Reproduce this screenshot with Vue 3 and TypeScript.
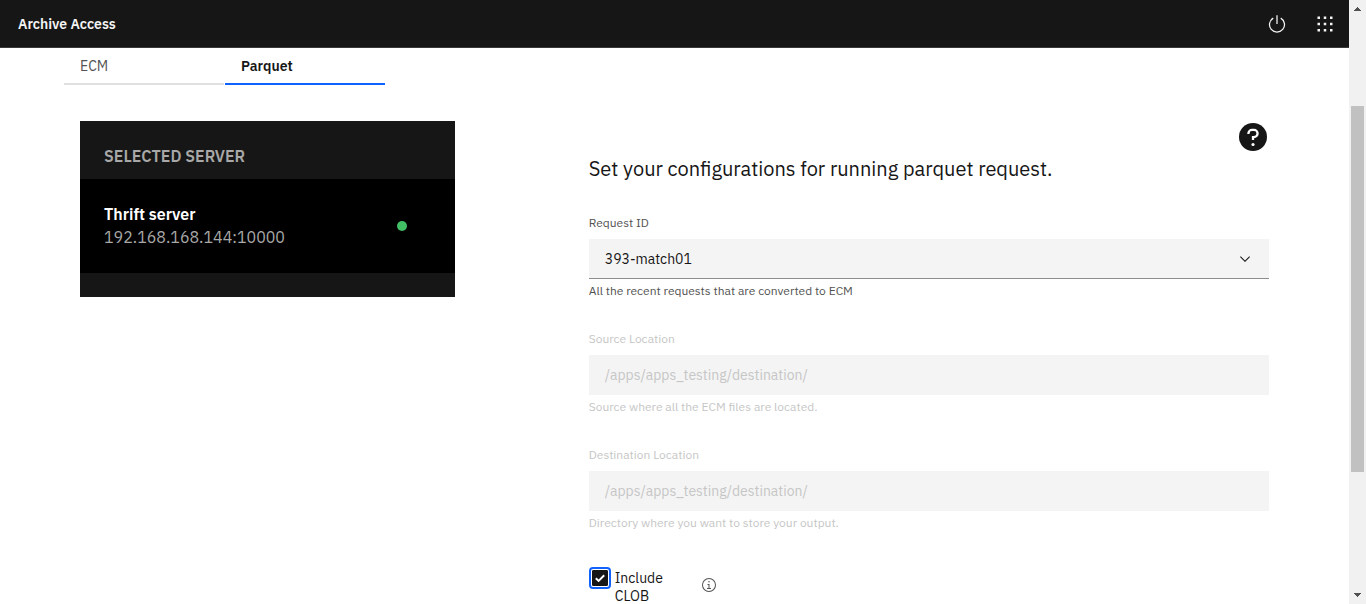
<script setup lang="ts">
import { ref } from 'vue'

interface Tab {
  id: string
  label: string
}

interface PathField {
  id: string
  label: string
  value: string
  helper: string
}

const tabs: Tab[] = [
  { id: 'ecm', label: 'ECM' },
  { id: 'parquet', label: 'Parquet' },
]
const activeTab = ref<string>('parquet')

const requests: string[] = ['393-match01']
const requestId = ref<string>('393-match01')

const fields: PathField[] = [
  {
    id: 'source',
    label: 'Source Location',
    value: '/apps/apps_testing/destination/',
    helper: 'Source where all the ECM files are located.',
  },
  {
    id: 'destination',
    label: 'Destination Location',
    value: '/apps/apps_testing/destination/',
    helper: 'Directory where you want to store your output.',
  },
]

const includeClob = ref<boolean>(true)
</script>

<template>
  <div class="shell">
    <div class="view">
      <header class="header">
        <a class="brand" href="#">Archive Access</a>
        <nav class="actions">
          <button class="icon-button" type="button" aria-label="Log out">
            <svg width="20" height="20" viewBox="0 0 32 32" fill="currentColor">
              <path d="M22.5 5.74l-1 1.73a11 11 0 1 1-11 0l-1-1.73a13 13 0 1 0 13 0z" />
              <path d="M15 2h2v14h-2z" />
            </svg>
          </button>
          <button class="icon-button" type="button" aria-label="Applications">
            <svg width="20" height="20" viewBox="0 0 32 32" fill="currentColor">
              <path
                d="M14 4h4v4h-4zM4 4h4v4H4zM24 4h4v4h-4zM14 14h4v4h-4zM4 14h4v4H4zM24 14h4v4h-4zM14 24h4v4h-4zM4 24h4v4H4zM24 24h4v4h-4z"
              />
            </svg>
          </button>
        </nav>
      </header>

      <main class="content">
        <div class="tabs" role="tablist">
          <button
            v-for="tab in tabs"
            :key="tab.id"
            class="tab"
            :class="{ active: tab.id === activeTab }"
            type="button"
            role="tab"
            :aria-selected="tab.id === activeTab"
            @click="activeTab = tab.id"
          >
            {{ tab.label }}
          </button>
        </div>

        <div class="grid">
          <aside class="server-card">
            <h2 class="server-title">SELECTED SERVER</h2>
            <div class="server-row">
              <div>
                <div class="server-name">Thrift server</div>
                <div class="server-address">192.168.168.144:10000</div>
              </div>
              <span class="status"></span>
            </div>
          </aside>

          <form class="config" @submit.prevent>
            <button class="help" type="button" aria-label="Help">
              <svg width="32" height="32" viewBox="0 0 32 32">
                <circle cx="16" cy="16" r="14" fill="#161616" />
                <path
                  d="M11.4 13v-.5A3.6 3.6 0 0 1 15 8.9h2a3.6 3.6 0 0 1 0 7.2h-1v3"
                  fill="none"
                  stroke="#fff"
                  stroke-width="2.3"
                />
                <circle cx="16" cy="23.5" r="1.6" fill="#fff" />
              </svg>
            </button>
            <h1 class="heading">Set your configurations for running parquet request.</h1>

            <div class="field">
              <label for="request">Request ID</label>
              <div class="select-wrap">
                <select id="request" v-model="requestId">
                  <option v-for="item in requests" :key="item" :value="item">{{ item }}</option>
                </select>
                <svg class="chevron" width="16" height="16" viewBox="0 0 16 16" fill="#161616">
                  <path d="M8 11L3 6l.7-.7L8 9.6l4.3-4.3.7.7z" />
                </svg>
              </div>
              <p class="helper">All the recent requests that are converted to ECM</p>
            </div>

            <div v-for="field in fields" :key="field.id" class="field disabled">
              <label :for="field.id">{{ field.label }}</label>
              <input :id="field.id" type="text" :value="field.value" disabled />
              <p class="helper">{{ field.helper }}</p>
            </div>

            <div class="option-row">
              <label class="option" for="clob">
                <span class="check">
                  <input id="clob" v-model="includeClob" type="checkbox" />
                  <svg v-if="includeClob" width="16" height="16" viewBox="0 0 16 16">
                    <path d="M3.8 8.2l2.8 2.7 5.6-5.6" fill="none" stroke="#fff" stroke-width="2" />
                  </svg>
                </span>
                <span class="option-text">Include CLOB</span>
              </label>
              <button class="info" type="button" aria-label="About CLOB">
                <svg width="16" height="16" viewBox="0 0 32 32" fill="currentColor">
                  <path d="M17 22v-8h-4v2h2v6h-3v2h8v-2zM16 8a1.5 1.5 0 1 0 1.5 1.5A1.5 1.5 0 0 0 16 8z" />
                  <path d="M16 30a14 14 0 1 1 14-14 14 14 0 0 1-14 14zm0-26a12 12 0 1 0 12 12A12 12 0 0 0 16 4z" />
                </svg>
              </button>
            </div>
          </form>
        </div>
      </main>
    </div>

    <div class="scrollbar" aria-hidden="true">
      <svg width="17" height="17" viewBox="0 0 17 17" fill="#505050">
        <path d="M5 11h7v-1h-1V9h-1V8H9V7H8v1H7v1H6v1H5z" />
      </svg>
      <div class="track"><div class="thumb"></div></div>
      <svg width="17" height="17" viewBox="0 0 17 17" fill="#505050">
        <path d="M5 6h7v1h-1v1h-1v1H9v1H8V9H7V8H6V7H5z" />
      </svg>
    </div>
  </div>
</template>

<style>
html,
body {
  margin: 0;
  height: 100%;
  overflow: hidden;
  background: #fff;
}
</style>

<style scoped>
.shell,
.shell * {
  box-sizing: border-box;
}

.shell {
  display: grid;
  grid-template-columns: minmax(0, 1fr) 17px;
  height: 100vh;
  overflow: hidden;
  color: #161616;
  font-family: 'IBM Plex Sans', 'Open Sans', sans-serif;
  font-size: 14px;
  line-height: 18px;
}

.view {
  overflow: hidden;
}

button,
input,
select {
  font: inherit;
  color: inherit;
}

button {
  padding: 0;
  border: 0;
  background: none;
  cursor: pointer;
}

svg {
  display: block;
}

h1,
h2,
p {
  margin: 0;
}

.header {
  display: flex;
  align-items: center;
  justify-content: space-between;
  height: 48px;
  padding-left: 18px;
  border-bottom: 1px solid #393939;
  background: #161616;
  color: #f4f4f4;
}

.brand {
  color: inherit;
  font-weight: 600;
  text-decoration: none;
}

.actions {
  display: flex;
}

.icon-button {
  display: grid;
  place-items: center;
  width: 48px;
  height: 48px;
}

.content {
  padding: 0 64px;
}

.tabs {
  display: flex;
  gap: 1px;
}

.tab {
  width: 160px;
  height: 37px;
  padding: 0 16px;
  border-bottom: 2px solid #e0e0e0;
  color: #525252;
  text-align: left;
}

.tab.active {
  border-bottom-color: #0f62fe;
  color: #161616;
  font-weight: 600;
}

.grid {
  display: grid;
  grid-template-columns: 4fr 8fr;
  align-items: start;
  padding-top: 36px;
}

.server-card {
  margin: 0 16px;
  padding-bottom: 24px;
  background: #161616;
  color: #a8a8a8;
  font-size: 16px;
  line-height: 23px;
}

.server-title {
  padding: 24px 24px 11px;
  font-size: 16px;
  font-weight: 600;
}

.server-row {
  display: flex;
  align-items: center;
  justify-content: space-between;
  padding: 24px 48px 24px 24px;
  background: #000;
}

.server-name {
  color: #fff;
  font-weight: 600;
}

.status {
  width: 10px;
  height: 10px;
  border-radius: 50%;
  background: #42be65;
}

.config {
  display: flex;
  flex-direction: column;
  margin-left: 12.5%;
  padding: 0 16px;
}

.help {
  align-self: flex-end;
}

.heading {
  margin: 2px 0 32px;
  font-size: 20px;
  font-weight: 400;
  line-height: 28px;
}

.field {
  display: flex;
  flex-direction: column;
  margin-bottom: 32px;
  color: #525252;
  font-size: 12px;
  line-height: 16px;
}

.field label {
  margin-bottom: 8px;
}

.field.disabled {
  color: #c6c6c6;
}

.field select,
.field input {
  width: 100%;
  height: 40px;
  padding: 0 16px;
  border: 0;
  border-radius: 0;
  background: #f4f4f4;
  font-size: 14px;
}

.field select {
  appearance: none;
  border-bottom: 1px solid #8d8d8d;
  color: #161616;
}

.select-wrap {
  position: relative;
}

.chevron {
  position: absolute;
  top: 12px;
  right: 16px;
  pointer-events: none;
}

.helper {
  margin-top: 4px;
}

.option-row {
  display: flex;
  align-items: flex-start;
  gap: 32px;
  padding-top: 6px;
}

.option {
  display: flex;
  gap: 7px;
  width: 80px;
  padding-left: 3px;
}

.check {
  display: grid;
  flex: none;
  width: 16px;
  height: 16px;
  margin-top: 1px;
}

.check > * {
  grid-area: 1 / 1;
}

.check input {
  width: 16px;
  height: 16px;
  margin: 0;
  appearance: none;
  border: 1px solid #161616;
  border-radius: 1px;
  outline: 2px solid #0f62fe;
  outline-offset: 1px;
}

.check input:checked {
  background: #161616;
}

.check svg {
  pointer-events: none;
}

.info {
  margin-top: 8px;
  color: #525252;
}

.scrollbar {
  display: flex;
  flex-direction: column;
  background: #f1f1f1;
}

.track {
  flex: 1;
  padding: 89px 2px 0;
}

.thumb {
  height: 76%;
  background: #c1c1c1;
}
</style>
